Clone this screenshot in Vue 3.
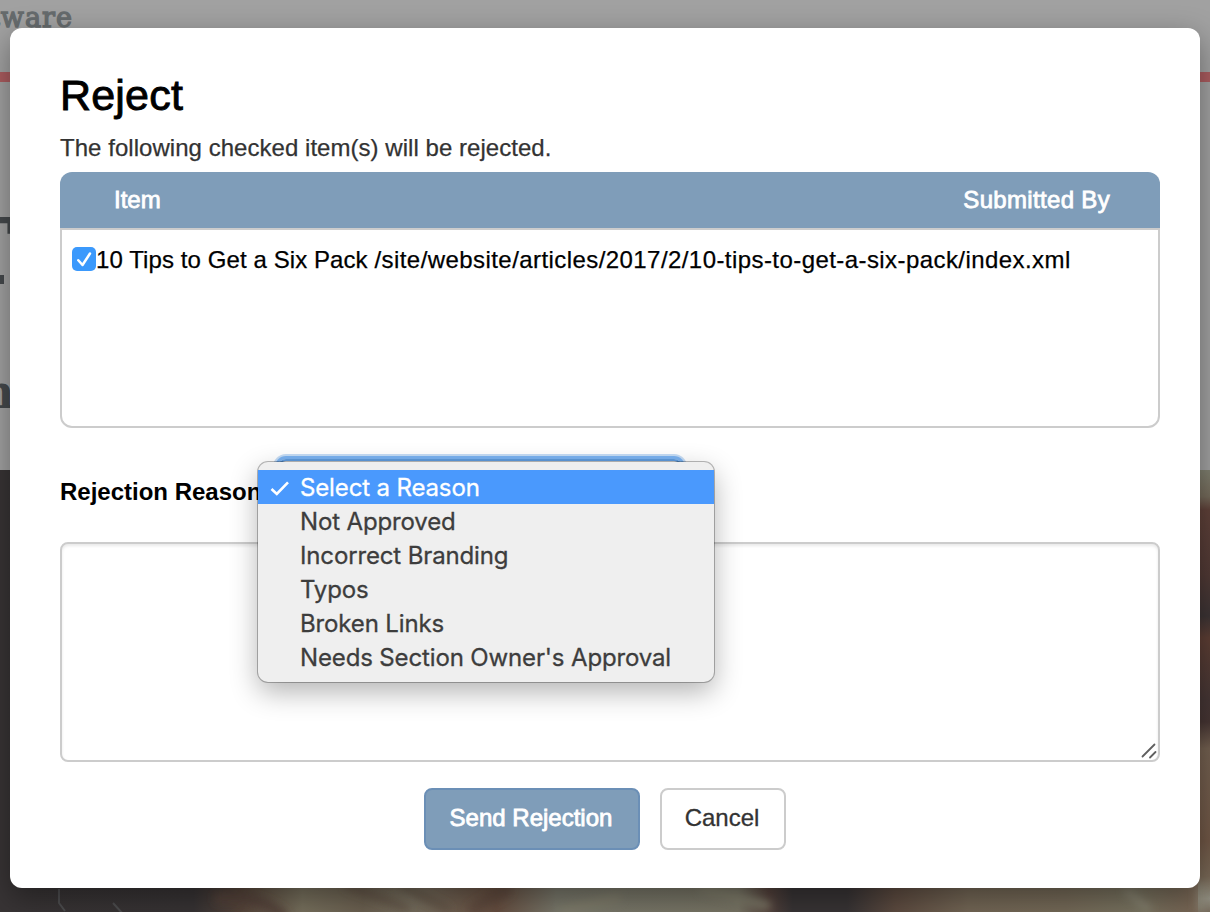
<script setup>
import { ref } from 'vue'

const reasons = [
  'Select a Reason',
  'Not Approved',
  'Incorrect Branding',
  'Typos',
  'Broken Links',
  "Needs Section Owner's Approval",
]
const selected = ref(0)
const checked = ref(true)
</script>

<template>
  <div class="screen">
    <svg class="backdrop" width="1210" height="912" viewBox="0 0 1210 912" aria-hidden="true">
      <defs>
        <linearGradient id="photo" x1="0" x2="1" y1="0" y2="0">
          <stop offset="0" stop-color="#383435" />
          <stop offset=".16" stop-color="#373334" />
          <stop offset=".2" stop-color="#56453a" />
          <stop offset=".25" stop-color="#77705d" />
          <stop offset=".3" stop-color="#6b6050" />
          <stop offset=".34" stop-color="#766e5e" />
          <stop offset=".41" stop-color="#664e40" />
          <stop offset=".46" stop-color="#78776a" />
          <stop offset=".61" stop-color="#777464" />
          <stop offset=".635" stop-color="#54423c" />
          <stop offset=".655" stop-color="#383435" />
          <stop offset=".70" stop-color="#383435" />
          <stop offset=".74" stop-color="#5d4b40" />
          <stop offset=".8" stop-color="#736655" />
          <stop offset=".88" stop-color="#746957" />
          <stop offset=".94" stop-color="#77725f" />
          <stop offset="1" stop-color="#76604f" />
        </linearGradient>
        <linearGradient id="edge" x1="0" x2="0" y1="0" y2="1">
          <stop offset="0" stop-color="#7f7f6f" />
          <stop offset=".06" stop-color="#746a5a" />
          <stop offset=".09" stop-color="#5f4139" />
          <stop offset=".24" stop-color="#503935" />
          <stop offset=".33" stop-color="#3c3435" />
          <stop offset=".38" stop-color="#5d3e34" />
          <stop offset=".52" stop-color="#453635" />
          <stop offset=".57" stop-color="#463533" />
          <stop offset=".63" stop-color="#736050" />
          <stop offset=".84" stop-color="#705746" />
          <stop offset=".92" stop-color="#786856" />
          <stop offset=".97" stop-color="#908d80" />
          <stop offset="1" stop-color="#776c5d" />
        </linearGradient>
        <filter id="soft"><feGaussianBlur stdDeviation="4" /></filter>
      </defs>
      <rect width="1210" height="912" fill="#a1a1a1" />
      <rect y="72" width="1210" height="10" fill="#ab5c5f" />
      <text class="slab brand" x="-11" y="27">tware</text>
      <text class="slab headline" x="-54" y="284">T</text>
      <rect y="275" width="4" height="9" fill="#45494c" />
      <text class="slab subline" x="-19" y="408">n</text>
      <rect y="470" width="1210" height="442" fill="url(#photo)" />
      <rect x="1198" y="470" width="12" height="442" fill="url(#edge)" />
      <g filter="url(#soft)" fill="none">
        <path d="M215 898q50-2 70 20" stroke="#54423a" stroke-width="10" />
        <path d="M345 885l65 25M400 885l50 25" stroke="#5f5042" stroke-width="5" />
        <path d="M470 912l40-24" stroke="#5e4a3d" stroke-width="10" />
        <path d="M560 912l60-15M700 888l70 18" stroke="#817e6c" stroke-width="8" />
        <path d="M1125 890l25 20M1200 886v26" stroke="#8a8674" stroke-width="6" />
      </g>
      <path d="M59 889v14l6 8M113 903l10 11" fill="none" stroke="#5b5f60" stroke-width="2" opacity=".6" />
    </svg>

    <section class="dialog">
      <h1>Reject</h1>
      <p class="intro">The following checked item(s) will be rejected.</p>

      <div class="table">
        <header class="table-head">
          <span>Item</span>
          <span class="by">Submitted By</span>
        </header>
        <div class="table-body">
          <label class="row">
            <input v-model="checked" type="checkbox" class="sr" />
            <span class="check">
              <svg v-if="checked" width="24" height="24" viewBox="0 0 24 24">
                <path d="M6.3 13.2l4.2 4.8L18 6.5" fill="none" stroke="#fff" stroke-width="2.5" stroke-linecap="round" stroke-linejoin="round" />
              </svg>
            </span>
            <span class="row-text">10 Tips to Get a Six Pack <span class="path">/site/website/articles/2017/2/10-tips-to-get-a-six-pack/index.xml</span></span>
          </label>
        </div>
      </div>

      <div class="reason">
        <span class="reason-label">Rejection Reason</span>
        <div class="select"></div>
        <ul class="menu">
          <li v-for="(reason, i) in reasons" :key="reason" :class="{ active: i === selected }" @click="selected = i">
            <svg class="tick" width="20" height="20" viewBox="0 0 20 20">
              <path v-if="i === selected" d="M1.5 12l5.3 5L18 5.3" fill="none" stroke="#fff" stroke-width="2.6" />
            </svg>
            <span class="option">{{ reason }}</span>
          </li>
        </ul>
      </div>

      <div class="comment">
        <svg width="16" height="16" viewBox="0 0 16 16">
          <path d="M1.5 13.5L13.5 1.5M9 14.5L14.5 9" fill="none" stroke="#5f5f5f" stroke-width="1.8" stroke-linecap="round" />
        </svg>
      </div>

      <footer class="actions">
        <button class="send">Send Rejection</button>
        <button class="cancel">Cancel</button>
      </footer>
    </section>
  </div>
</template>

<style>
body {
  margin: 0;
  overflow: hidden;
}
</style>

<style scoped>
.screen {
  position: relative;
  box-sizing: border-box;
  width: 1210px;
  height: 912px;
  padding: 28px 10px 24px;
  overflow: hidden;
  font-family: "Liberation Sans", Arial, sans-serif;
  font-size: 24px;
  color: #000;
}
.backdrop {
  position: absolute;
  inset: 0;
}
.slab {
  font-family: "DejaVu Serif", serif;
  font-weight: 700;
}
.brand {
  font-size: 27px;
  font-weight: 400;
  letter-spacing: 1px;
  fill: #666b6d;
  stroke: #666b6d;
  stroke-width: 1.3px;
}
.headline {
  font-size: 92px;
  fill: #45494c;
}
.subline {
  font-size: 46px;
  fill: #45494c;
}
.dialog {
  position: relative;
  box-sizing: border-box;
  display: flex;
  flex-direction: column;
  height: 860px;
  padding: 43px 40px 38px 50px;
  border-radius: 12px;
  background: #fff;
  box-shadow: 0 10px 30px rgba(0, 0, 0, .38);
}
h1 {
  margin: 0;
  height: 48px;
  line-height: 48px;
  font-size: 43px;
  font-weight: 400;
  letter-spacing: .2px;
  -webkit-text-stroke: .9px #000;
}
.intro {
  margin: 13px 0 8px;
  height: 32px;
  line-height: 32px;
  letter-spacing: .04px;
  color: #333;
  -webkit-text-stroke: .25px #333;
}
.table-head {
  display: flex;
  justify-content: space-between;
  height: 56px;
  padding: 0 50px 0 54px;
  line-height: 56px;
  border-radius: 12px 12px 0 0;
  background: #7f9db9;
  color: #fff;
  -webkit-text-stroke: .8px #fff;
}
.by {
  letter-spacing: .33px;
}
.table-body {
  box-sizing: border-box;
  height: 200px;
  padding: 14px 10px;
  border: 2px solid #ccc;
  border-radius: 0 0 12px 12px;
}
.row {
  display: flex;
  align-items: center;
  height: 32px;
  white-space: nowrap;
}
.row-text {
  letter-spacing: .09px;
  -webkit-text-stroke: .25px #000;
}
.path {
  letter-spacing: .43px;
}
.sr {
  position: absolute;
  opacity: 0;
}
.check {
  display: flex;
  width: 24px;
  height: 24px;
  margin-top: -2px;
  border-radius: 5px;
  background: #3b99fc;
}
.reason {
  position: relative;
  display: flex;
  align-items: center;
  height: 70px;
  margin: 28px 0 16px;
}
.reason-label {
  width: 218px;
  padding-top: 2px;
  font-weight: 700;
  white-space: nowrap;
}
.select {
  box-sizing: border-box;
  width: 404px;
  height: 64px;
  border: 2px solid #5f9bdc;
  border-radius: 8px;
  box-shadow: 0 0 0 3px #7ab2f1, 0 0 0 5px #c5dcf5;
}
.menu {
  position: absolute;
  left: 198px;
  top: 6px;
  box-sizing: border-box;
  width: 456px;
  height: 220px;
  margin: 0;
  padding: 8px 0;
  list-style: none;
  border-radius: 10px;
  background: #efefef;
  box-shadow: 0 0 0 1px rgba(0, 0, 0, .27), 0 10px 28px rgba(0, 0, 0, .3);
  font-family: Inter, sans-serif;
  color: #3d3d3d;
}
.menu li {
  display: flex;
  align-items: center;
  gap: 10px;
  height: 34px;
  padding-left: 12px;
  line-height: 34px;
  letter-spacing: -.14px;
  white-space: nowrap;
  -webkit-text-stroke: .3px currentColor;
}
.option {
  padding-top: 2px;
}
.menu .active {
  background: #4a99fd;
  color: #fff;
}
.comment {
  box-sizing: border-box;
  display: flex;
  align-items: flex-end;
  justify-content: flex-end;
  height: 220px;
  padding: 0 1px 1px 0;
  border: 2px solid #ccc;
  border-radius: 8px;
  box-shadow: inset 0 2px 3px rgba(0, 0, 0, .09);
}
.actions {
  display: flex;
  justify-content: center;
  gap: 20px;
  margin: 26px 10px 0 0;
}
button {
  box-sizing: border-box;
  height: 62px;
  padding: 0 2px 2px 0;
  border: 2px solid #ccc;
  border-radius: 8px;
  background: #fff;
  font: inherit;
  color: #333;
}
.send {
  width: 216px;
  border-color: #6b8fb6;
  background: #7f9db9;
  color: #fff;
  -webkit-text-stroke: .8px #fff;
}
.cancel {
  width: 126px;
  -webkit-text-stroke: .3px #333;
}
</style>
